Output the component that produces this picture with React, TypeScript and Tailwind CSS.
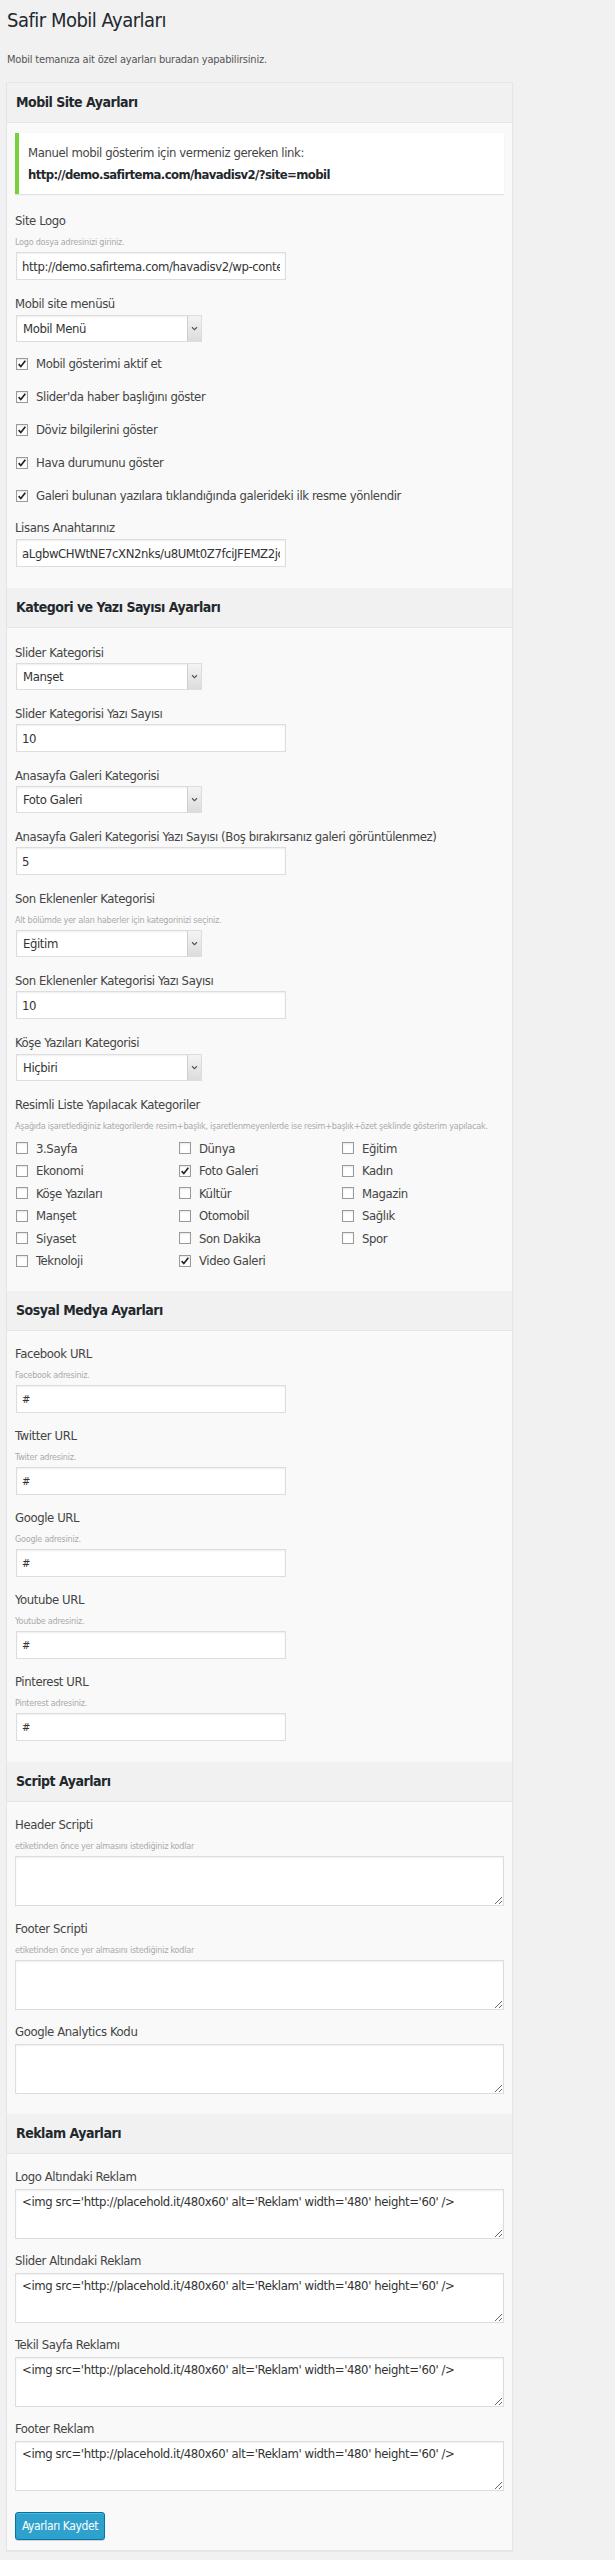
import React from 'react';

const checkOptions = [
  { label: 'Mobil gösterimi aktif et', checked: true },
  { label: "Slider'da haber başlığını göster", checked: true },
  { label: 'Döviz bilgilerini göster', checked: true },
  { label: 'Hava durumunu göster', checked: true },
  { label: 'Galeri bulunan yazılara tıklandığında galerideki ilk resme yönlendir', checked: true },
];

// grid order: row by row, 3 columns
const categories = [
  { label: '3.Sayfa', checked: false },
  { label: 'Dünya', checked: false },
  { label: 'Eğitim', checked: false },
  { label: 'Ekonomi', checked: false },
  { label: 'Foto Galeri', checked: true },
  { label: 'Kadın', checked: false },
  { label: 'Köşe Yazıları', checked: false },
  { label: 'Kültür', checked: false },
  { label: 'Magazin', checked: false },
  { label: 'Manşet', checked: false },
  { label: 'Otomobil', checked: false },
  { label: 'Sağlık', checked: false },
  { label: 'Siyaset', checked: false },
  { label: 'Son Dakika', checked: false },
  { label: 'Spor', checked: false },
  { label: 'Teknoloji', checked: false },
  { label: 'Video Galeri', checked: true },
];

const adCode = "<img src='http://placehold.it/480x60' alt='Reklam' width='480' height='60' />";

function Box({ checked }: { checked: boolean }) {
  return (
    <span className="w-[12px] h-[12px] shrink-0 border border-[#9a9a9a] bg-white flex items-center justify-center shadow-[inset_0_1px_2px_rgba(0,0,0,0.1)]">
      {checked && (
        <svg viewBox="0 0 12 12" className="w-[10px] h-[10px]">
          <path d="M2 6.2l2.6 2.8L10 2.2" fill="none" stroke="#222" strokeWidth={2} />
        </svg>
      )}
    </span>
  );
}

function SectionHeader({ title }: { title: string }) {
  return (
    <div className="h-[40px] bg-[#f1f1f1] border-b border-[#e5e5e5] px-[9px] flex items-center">
      <h2 className="text-[14px] font-bold tracking-[-0.5px] text-[#23282d]">{title}</h2>
    </div>
  );
}

function Label({ children }: { children: React.ReactNode }) {
  return <label className="block text-[13px] tracking-[-0.4px] leading-[18px] text-[#444]">{children}</label>;
}

function Desc({ children }: { children: React.ReactNode }) {
  return (
    <p className="mt-[5px] text-[9px] tracking-[-0.25px] leading-[14px] text-[#aaa] whitespace-nowrap">{children}</p>
  );
}

function TextInput({ value, className = '' }: { value: string; className?: string }) {
  return (
    <input
      type="text"
      defaultValue={value}
      className={`block ml-px w-[270px] h-[28px] px-[5px] bg-white border border-[#ddd] shadow-[inset_0_1px_2px_rgba(0,0,0,0.07)] text-[13px] tracking-[-0.4px] text-[#333] outline-none ${className}`}
    />
  );
}

function SelectBox({ value, className = '' }: { value: string; className?: string }) {
  return (
    <div className={`relative ml-px w-[186px] h-[27px] ${className}`}>
      <select
        defaultValue={value}
        className="appearance-none w-full h-full pl-[6px] pr-[18px] bg-white border border-[#ddd] shadow-[inset_0_1px_2px_rgba(0,0,0,0.07)] text-[13px] tracking-[-0.4px] text-[#333] outline-none"
      >
        <option>{value}</option>
      </select>
      <span className="pointer-events-none absolute right-px top-px bottom-px w-[14px] border-l border-[#cfcfcf] bg-gradient-to-b from-[#f4f4f4] to-[#dcdcdc] flex items-center justify-center">
        <svg viewBox="0 0 8 6" className="w-[7px] h-[5px]">
          <path d="M1 1.5l3 3 3-3" fill="none" stroke="#555" strokeWidth={1.3} />
        </svg>
      </span>
    </div>
  );
}

function TextArea({ value = '', className = '' }: { value?: string; className?: string }) {
  return (
    <textarea
      defaultValue={value}
      className={`block w-full h-[50px] px-[6px] py-[3px] bg-white border border-[#ddd] shadow-[inset_0_1px_2px_rgba(0,0,0,0.07)] text-[13px] tracking-[-0.4px] leading-[18px] text-[#333] outline-none resize-y ${className}`}
    />
  );
}

export default function App() {
  return (
    <div className="min-h-screen bg-[#f1f1f1] text-[#444] [font-family:'DejaVu_Sans_Condensed','DejaVu_Sans',sans-serif] pl-[6px] pt-[6px] pb-[12px]">
      <h1 className="pl-px text-[20px] tracking-[-0.5px] leading-[28px] text-[#23282d]">Safir Mobil Ayarları</h1>
      <p className="mt-[18px] pl-px text-[11px] tracking-[-0.2px] leading-[16px] text-[#555]">
        Mobil temanıza ait özel ayarları buradan yapabilirsiniz.
      </p>

      <div className="mt-[14px] w-[507px] border border-[#e5e5e5] bg-[#f9f9f9] shadow-[0_1px_1px_rgba(0,0,0,0.04)]">
        {/* Mobil Site Ayarları */}
        <SectionHeader title="Mobil Site Ayarları" />
        <div className="px-[8px] pt-[10px] pb-[21px]">
          <div className="border-l-4 border-[#7ad03a] bg-white shadow-[0_1px_1px_rgba(0,0,0,0.1)] pl-[9px] pt-[9px] pb-[8px] text-[13px] tracking-[-0.4px] leading-[22px]">
            <p className="text-[#444]">Manuel mobil gösterim için vermeniz gereken link:</p>
            <p className="font-bold tracking-[-0.6px] text-[#23282d]">http://demo.safirtema.com/havadisv2/?site=mobil</p>
          </div>

          <div className="mt-[18px]">
            <Label>Site Logo</Label>
            <Desc>Logo dosya adresinizi giriniz.</Desc>
            <TextInput value="http://demo.safirtema.com/havadisv2/wp-content/plugins/safir-mobil/logo.png" className="mt-[3px]" />
          </div>

          <div className="mt-[15px]">
            <Label>Mobil site menüsü</Label>
            <SelectBox value="Mobil Menü" className="mt-[2px]" />
          </div>

          <div className="mt-[5px]">
            {checkOptions.map((o) => (
              <div key={o.label} className="h-[33px] flex items-center gap-[8px] pl-px">
                <Box checked={o.checked} />
                <span className="text-[13px] tracking-[-0.4px] text-[#444]">{o.label}</span>
              </div>
            ))}
          </div>

          <div className="mt-[7px]">
            <Label>Lisans Anahtarınız</Label>
            <TextInput value="aLgbwCHWtNE7cXN2nks/u8UMt0Z7fciJFEMZ2jc5WYqP0x" className="mt-[2px]" />
          </div>
        </div>

        {/* Kategori ve Yazı Sayısı Ayarları */}
        <SectionHeader title="Kategori ve Yazı Sayısı Ayarları" />
        <div className="px-[8px] pt-[16px] pb-[19px]">
          <div>
            <Label>Slider Kategorisi</Label>
            <SelectBox value="Manşet" className="mt-px" />
          </div>
          <div className="mt-[15px]">
            <Label>Slider Kategorisi Yazı Sayısı</Label>
            <TextInput value="10" className="mt-px" />
          </div>
          <div className="mt-[15px]">
            <Label>Anasayfa Galeri Kategorisi</Label>
            <SelectBox value="Foto Galeri" className="mt-px" />
          </div>
          <div className="mt-[15px]">
            <Label>Anasayfa Galeri Kategorisi Yazı Sayısı (Boş bırakırsanız galeri görüntülenmez)</Label>
            <TextInput value="5" className="mt-px" />
          </div>
          <div className="mt-[15px]">
            <Label>Son Eklenenler Kategorisi</Label>
            <Desc>Alt bölümde yer alan haberler için kategorinizi seçiniz.</Desc>
            <SelectBox value="Eğitim" className="mt-[3px]" />
          </div>
          <div className="mt-[15px]">
            <Label>Son Eklenenler Kategorisi Yazı Sayısı</Label>
            <TextInput value="10" className="mt-px" />
          </div>
          <div className="mt-[15px]">
            <Label>Köşe Yazıları Kategorisi</Label>
            <SelectBox value="Hiçbiri" className="mt-[2px]" />
          </div>
          <div className="mt-[15px]">
            <Label>Resimli Liste Yapılacak Kategoriler</Label>
            <Desc>Aşağıda işaretlediğiniz kategorilerde resim+başlık, işaretlenmeyenlerde ise resim+başlık+özet şeklinde gösterim yapılacak.</Desc>
            <div className="mt-[4px] grid grid-cols-3 auto-rows-[22.5px]">
              {categories.map((c) => (
                <div key={c.label} className="flex items-center gap-[8px] pl-px">
                  <Box checked={c.checked} />
                  <span className="text-[13px] tracking-[-0.4px] text-[#444]">{c.label}</span>
                </div>
              ))}
            </div>
          </div>
        </div>

        {/* Sosyal Medya Ayarları */}
        <SectionHeader title="Sosyal Medya Ayarları" />
        <div className="px-[8px] pt-[14px] pb-[21px]">
          {[
            ['Facebook URL', 'Facebook adresiniz.'],
            ['Twitter URL', 'Twiter adresiniz.'],
            ['Google URL', 'Google adresiniz.'],
            ['Youtube URL', 'Youtube adresiniz.'],
            ['Pinterest URL', 'Pinterest adresiniz.'],
          ].map(([label, desc], i) => (
            <div key={label} className={i === 0 ? '' : 'mt-[14px]'}>
              <Label>{label}</Label>
              <Desc>{desc}</Desc>
              <TextInput value="#" className="mt-[3px] !text-[11px]" />
            </div>
          ))}
        </div>

        {/* Script Ayarları */}
        <SectionHeader title="Script Ayarları" />
        <div className="px-[8px] pt-[14px] pb-[20px]">
          <div>
            <Label>Header Scripti</Label>
            <Desc>etiketinden önce yer almasını istediğiniz kodlar</Desc>
            <TextArea className="mt-[3px]" />
          </div>
          <div className="mt-[14px]">
            <Label>Footer Scripti</Label>
            <Desc>etiketinden önce yer almasını istediğiniz kodlar</Desc>
            <TextArea className="mt-[3px]" />
          </div>
          <div className="mt-[13px]">
            <Label>Google Analytics Kodu</Label>
            <TextArea className="mt-[3px]" />
          </div>
        </div>

        {/* Reklam Ayarları */}
        <SectionHeader title="Reklam Ayarları" />
        <div className="px-[8px] pt-[14px] pb-[10px]">
          {['Logo Altındaki Reklam', 'Slider Altındaki Reklam', 'Tekil Sayfa Reklamı', 'Footer Reklam'].map((label, i) => (
            <div key={label} className={i === 0 ? '' : 'mt-[13px]'}>
              <Label>{label}</Label>
              <TextArea value={adCode} className="mt-[3px]" />
            </div>
          ))}

          <button className="mt-[21px] w-[90px] h-[28px] rounded-[3px] bg-[#2ea2cc] border border-[#0074a2] text-white text-[12px] tracking-[-0.4px] whitespace-nowrap shadow-[inset_0_1px_0_rgba(120,200,230,0.5),0_1px_0_rgba(0,0,0,0.15)]">
            Ayarları Kaydet
          </button>
        </div>
      </div>
    </div>
  );
}
